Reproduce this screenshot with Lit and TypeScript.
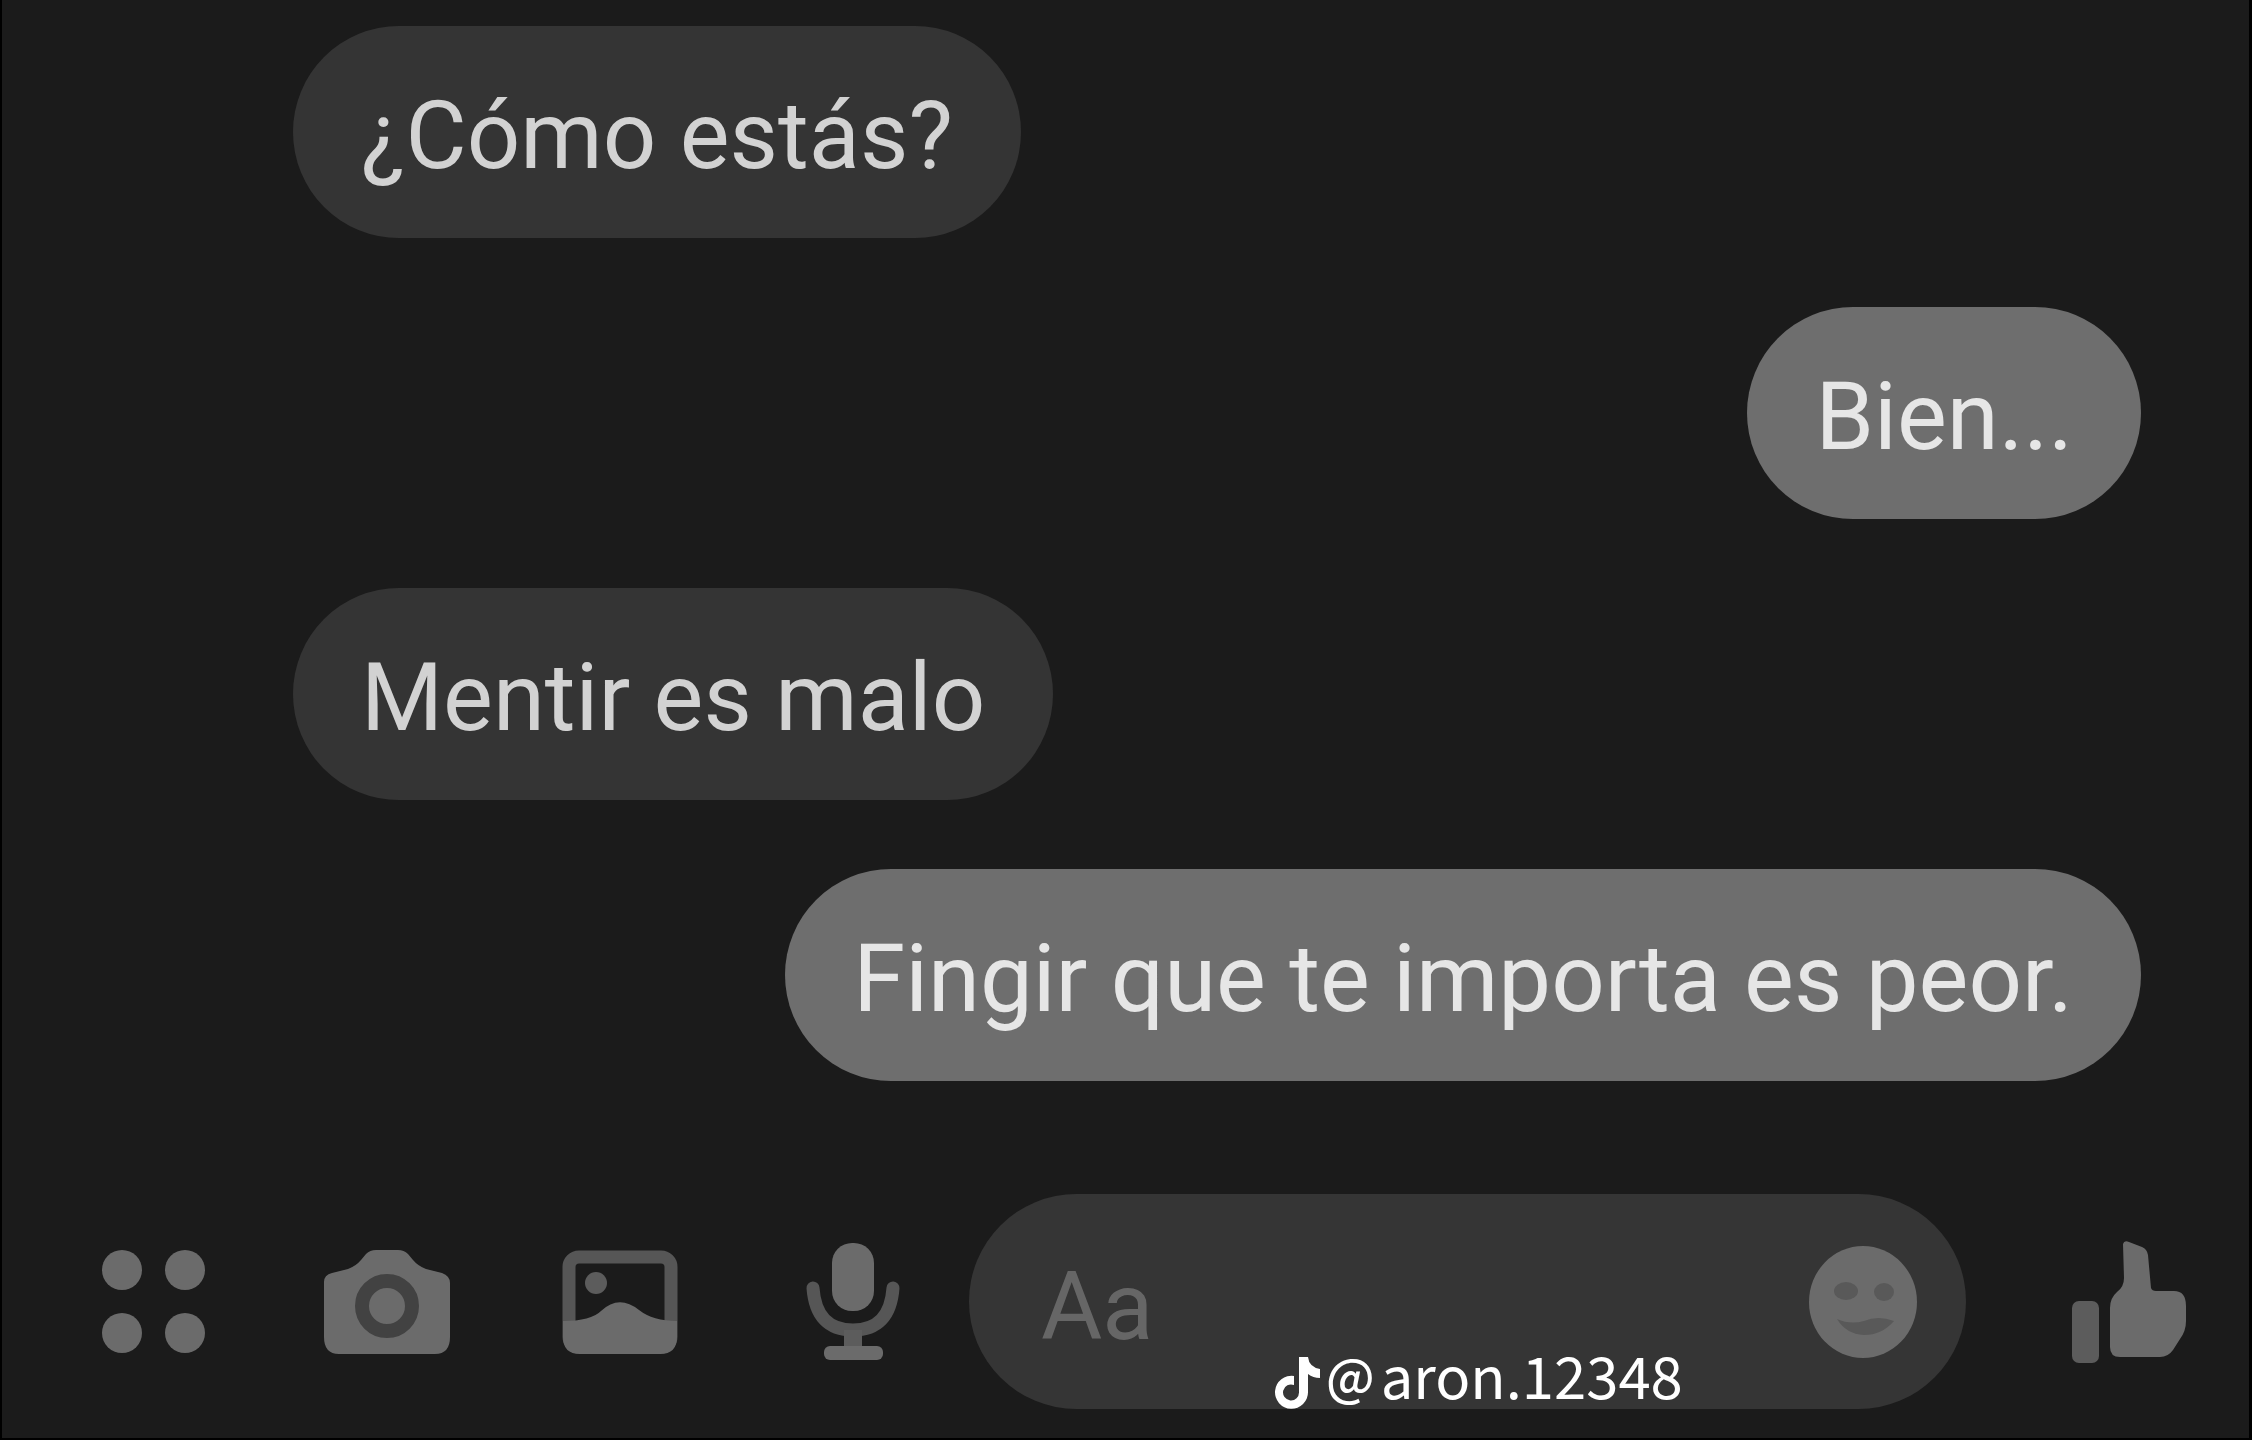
import { LitElement, html, css, svg } from "lit";
import { customElement, property, state } from "lit/decorators.js";
import { classMap } from "lit/directives/class-map.js";

interface Message {
  text: string;
  own: boolean;
}

const dotsIcon = svg`
  <svg class="icon" width="106" height="106" viewBox="0 0 106 106" aria-hidden="true">
    <circle cx="21" cy="21" r="20" />
    <circle cx="84" cy="21" r="20" />
    <circle cx="21" cy="84" r="20" />
    <circle cx="84" cy="84" r="20" />
  </svg>`;

const cameraIcon = svg`
  <svg class="icon" width="130" height="106" viewBox="0 0 130 106" aria-hidden="true">
    <path d="M10 24 L26 20 Q34 17 39 11 L44 5 Q48 1 54 1 H76 Q82 1 86 5 L91 11 Q96 17 104 20 L120 24 Q128 27 128 34 V88 Q128 105 113 105 H17 Q2 105 2 88 V33 Q2 26 10 24 Z" />
    <circle class="lens" cx="65" cy="57" r="25" />
  </svg>`;

const pictureIcon = svg`
  <svg class="icon" width="118" height="106" viewBox="0 0 118 106" aria-hidden="true">
    <rect class="frame" x="8" y="8" width="102" height="90" rx="10" />
    <circle class="dim" cx="35" cy="34" r="11" />
    <path d="M2 72 Q30 72 40 62 Q58 45 78 61 Q92 72 116 72 V88 Q116 105 99 105 H19 Q2 105 2 88 Z" />
  </svg>`;

const micIcon = svg`
  <svg class="icon" width="94" height="120" viewBox="0 0 94 120" aria-hidden="true">
    <rect x="26" y="1" width="42" height="68" rx="20" />
    <path class="cradle" d="M7 46 Q10 88 47 88 Q84 88 87 46" />
    <rect class="dim" x="38" y="88" width="18" height="18" />
    <rect x="18" y="104" width="59" height="14" rx="6" />
  </svg>`;

const smileIcon = svg`
  <svg class="icon" width="110" height="114" viewBox="0 0 110 114" aria-hidden="true">
    <ellipse cx="55" cy="57" rx="54" ry="56" />
    <ellipse class="face" cx="38" cy="46" rx="12" ry="9" />
    <ellipse class="face" cx="76" cy="47" rx="10" ry="9" />
    <path class="face" d="M29 74 Q42 80 56 76 Q70 70 86 76 Q74 90 56 90 Q38 89 29 74 Z" />
  </svg>`;

const thumbIcon = svg`
  <svg class="icon" width="118" height="124" viewBox="0 0 118 124" aria-hidden="true">
    <rect class="dim" x="2" y="61" width="27" height="62" rx="7" />
    <path d="M53 4 Q54 0 59 2 L72 7 Q77 9 78 15 L81 48 Q82 51 86 51 H104 Q116 51 116 66 V81 Q116 91 110 99 L103 110 Q98 117 90 117 H50 Q40 117 40 107 V68 Q40 58 47 52 Q54 47 54 38 Z" />
  </svg>`;

const noteIcon = svg`
  <svg class="note" width="45" height="52" viewBox="0 0 45 52" aria-hidden="true">
    <path d="M24 0 H33 Q34 10 45 12 V21 Q38 21 33 17 V35 A16.500 16.500 0 1 1 19 19 V28 A8 8 0 1 0 24 35 Z" />
  </svg>`;

@customElement("chat-bubble")
export class ChatBubble extends LitElement {
  @property({ type: Boolean, reflect: true }) own = false;

  static styles = css`
    :host {
      display: block;
      max-width: 90%;
    }
    .bubble {
      margin: 0;
      padding: 55px 68px 47px;
      border-radius: 106px;
      background: #343434;
      color: #d2d2d2;
      font: 400 94px/110px Roboto, sans-serif;
      overflow-wrap: anywhere;
    }
    .own {
      background: #6e6e6e;
      color: #e6e6e6;
    }
  `;

  render() {
    return html`<p class=${classMap({ bubble: true, own: this.own })}><slot></slot></p>`;
  }
}

@customElement("chat-composer")
export class ChatComposer extends LitElement {
  @state() private draft = "";

  static styles = css`
    :host {
      display: block;
    }
    .bar {
      display: flex;
      align-items: center;
      margin: 0;
      padding: 0 4px 0 35px;
    }
    button {
      display: flex;
      align-items: center;
      justify-content: center;
      flex: none;
      margin: 0;
      padding: 0;
      border: 0;
      background: none;
      cursor: pointer;
    }
    .tool {
      width: 233px;
      height: 128px;
    }
    .field {
      display: flex;
      align-items: center;
      flex: 1;
      min-width: 0;
      margin-right: 46px;
      padding: 0 48px 0 72px;
      border-radius: 108px;
      background: #353535;
    }
    .text {
      flex: 1;
      min-width: 0;
      height: 215px;
      box-sizing: border-box;
      margin: 0;
      padding: 10px 0 0;
      border: 0;
      outline: 0;
      background: none;
      color: #d2d2d2;
      font: 400 94px/110px Roboto, sans-serif;
    }
    .text::placeholder {
      color: #666666;
      opacity: 1;
    }
    .icon {
      display: block;
      fill: #6b6b6b;
    }
    .lens {
      fill: #6b6b6b;
      stroke: #424242;
      stroke-width: 14;
    }
    .frame {
      fill: none;
      stroke: #565656;
      stroke-width: 13;
    }
    .dim {
      fill: #5c5c5c;
    }
    .cradle {
      fill: none;
      stroke: #565656;
      stroke-width: 13;
      stroke-linecap: round;
    }
    .face {
      fill: #595959;
    }
  `;

  render() {
    return html`
      <form class="bar" @submit=${(e: Event) => e.preventDefault()}>
        <button class="tool" type="button" aria-label="Más opciones">${dotsIcon}</button>
        <button class="tool" type="button" aria-label="Cámara">${cameraIcon}</button>
        <button class="tool" type="button" aria-label="Galería">${pictureIcon}</button>
        <button class="tool" type="button" aria-label="Micrófono">${micIcon}</button>
        <div class="field">
          <input
            class="text"
            type="text"
            placeholder="Aa"
            aria-label="Mensaje"
            .value=${this.draft}
            @input=${(e: Event) => (this.draft = (e.target as HTMLInputElement).value)}
          />
          <button type="button" aria-label="Emoji">${smileIcon}</button>
        </div>
        <button class="tool" type="button" aria-label="Me gusta">${thumbIcon}</button>
      </form>
    `;
  }
}

@customElement("app-root")
export class AppRoot extends LitElement {
  @state() private messages: Message[] = [
    { text: "¿Cómo estás?", own: false },
    { text: "Bien...", own: true },
    { text: "Mentir es malo", own: false },
    { text: "Fingir que te importa es peor.", own: true },
  ];

  static styles = css`
    :host {
      display: block;
    }
    .chat {
      position: relative;
      display: flex;
      flex-direction: column;
      box-sizing: border-box;
      min-height: 100vh;
      padding: 26px 0 29px;
      border: solid #000000;
      border-width: 0 3px 2px 2px;
      background: #1b1b1b;
    }
    .messages {
      display: flex;
      flex: 1;
      flex-direction: column;
      align-items: flex-start;
      gap: 69px;
      padding: 0 108px 0 291px;
    }
    .sent {
      align-self: flex-end;
    }
    .watermark {
      position: absolute;
      right: 25.2%;
      bottom: 29px;
      display: flex;
      align-items: center;
      gap: 6px;
      color: #ffffff;
      font: 400 58px/64px "Noto Sans CJK SC", sans-serif;
      pointer-events: none;
    }
    .note {
      margin-top: 18px;
      fill: currentColor;
    }
    .at {
      font-size: 50px;
      font-weight: 500;
    }
  `;

  render() {
    return html`
      <main class="chat">
        <section class="messages" aria-label="Conversación">
          ${this.messages.map(
            (m) => html`<chat-bubble class=${m.own ? "sent" : "received"} ?own=${m.own}>${m.text}</chat-bubble>`
          )}
        </section>
        <chat-composer></chat-composer>
        <div class="watermark">${noteIcon}<span class="at">@</span><span>aron.12348</span></div>
      </main>
    `;
  }
}
